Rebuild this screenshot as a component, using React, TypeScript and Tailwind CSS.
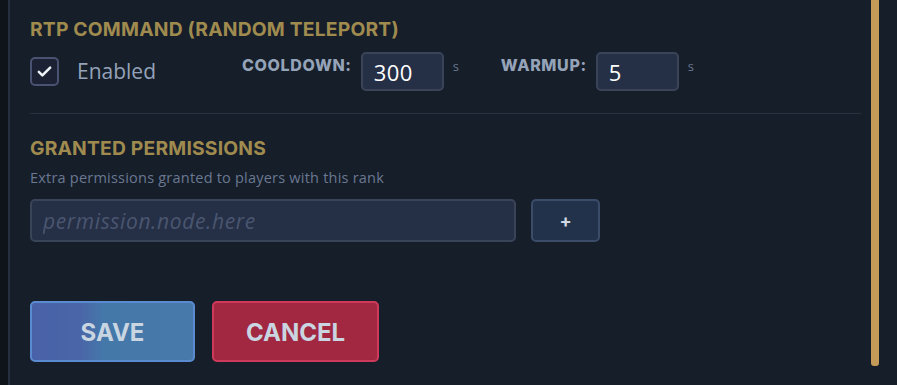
import React from "react";

const heading = "text-[19.3px] leading-[24px] font-bold text-[#a08b4f] tracking-[0.01em]";
const label = "text-[16px] font-extrabold uppercase tracking-[0.04em] text-[#95a3b9] mt-[1px]";
const inputBox =
  "bg-[#252f46] border-2 border-[#3a4459] rounded-[5px] text-white outline-none";

function NumberField({ label: text, value }: { label: string; value: string }) {
  return (
    <div className="flex items-start gap-[9px]">
      <span className={label}>{text}</span>
      <input
        defaultValue={value}
        className={`${inputBox} w-[83px] h-[39px] px-[11px] text-[22px] tracking-[0.02em] font-['Open_Sans',sans-serif]`}
      />
      <span className="text-[13px] text-[#68778f] mt-[5px] font-['Open_Sans',sans-serif]">s</span>
    </div>
  );
}

export default function App() {
  return (
    <div className="relative flex w-[897px] h-[385px] overflow-hidden bg-[#0e1219] font-['Inter',sans-serif]">
      <div className="w-[8px] bg-[#0f131a]" />
      <div className="w-[2px] bg-[#262f3d]" />
      <div className="flex-1 bg-[#161e2a] pl-[20px] pr-[36px] pt-[17px]">
        <h2 className={heading}>RTP COMMAND (RANDOM TELEPORT)</h2>

        <div className="mt-[11px] flex items-start">
          <label className="w-[212px] h-[39px] flex items-center gap-[18px]">
            <span className="w-[29px] h-[29px] rounded-[5px] border-2 border-[#4a5272] bg-[#1c2233] flex items-center justify-center">
              <svg width="17" height="17" viewBox="0 0 24 24" fill="none">
                <path d="M4 12.5l5 5L20 6.5" stroke="#eef2f7" strokeWidth="3.6" strokeLinecap="round" strokeLinejoin="round" />
              </svg>
            </span>
            <span className="text-[21px] text-[#94a2b8] font-['Open_Sans',sans-serif]">Enabled</span>
          </label>
          <NumberField label="Cooldown:" value="300" />
          <div className="w-[42px]" />
          <NumberField label="Warmup:" value="5" />
        </div>

        <div className="mt-[22px] h-px bg-[#283140]" />

        <h2 className={`${heading} mt-[22px]`}>GRANTED PERMISSIONS</h2>
        <p className="mt-[9px] text-[14.5px] leading-[18px] tracking-[0.015em] text-[#6a7891] font-['Open_Sans',sans-serif]">
          Extra permissions granted to players with this rank
        </p>

        <div className="mt-[12px] flex gap-[15px]">
          <input
            placeholder="permission.node.here"
            className={`${inputBox} w-[486px] h-[43px] px-[11px] text-[21px] tracking-[0.03em] italic placeholder:text-[#4a5670] font-['Open_Sans',sans-serif]`}
          />
          <button className="w-[69px] h-[43px] rounded-[5px] bg-[#22324b] border-2 border-[#3b4c69] text-[#cfd8e3] text-[18px] font-bold">
            +
          </button>
        </div>

        <div className="mt-[59px] flex gap-[17px]">
          <button className="w-[165px] h-[61px] pt-[2px] rounded-[5px] border-2 border-[#5a8bd0] bg-[linear-gradient(90deg,#4961a8_0%,#4a66a8_30%,#4478a9_45%,#4879ab_100%)] text-[#c9d5e1] text-[24px] font-bold">
            SAVE
          </button>
          <button className="w-[167px] h-[61px] pt-[2px] rounded-[5px] border-2 border-[#cf3a5a] bg-[#a12840] text-[#c9d5e1] text-[24px] font-bold">
            CANCEL
          </button>
        </div>
      </div>
      <div className="absolute left-[871px] top-0 w-[8px] h-[366px] rounded-b-[3px] bg-[#c49a58]" />
    </div>
  );
}
